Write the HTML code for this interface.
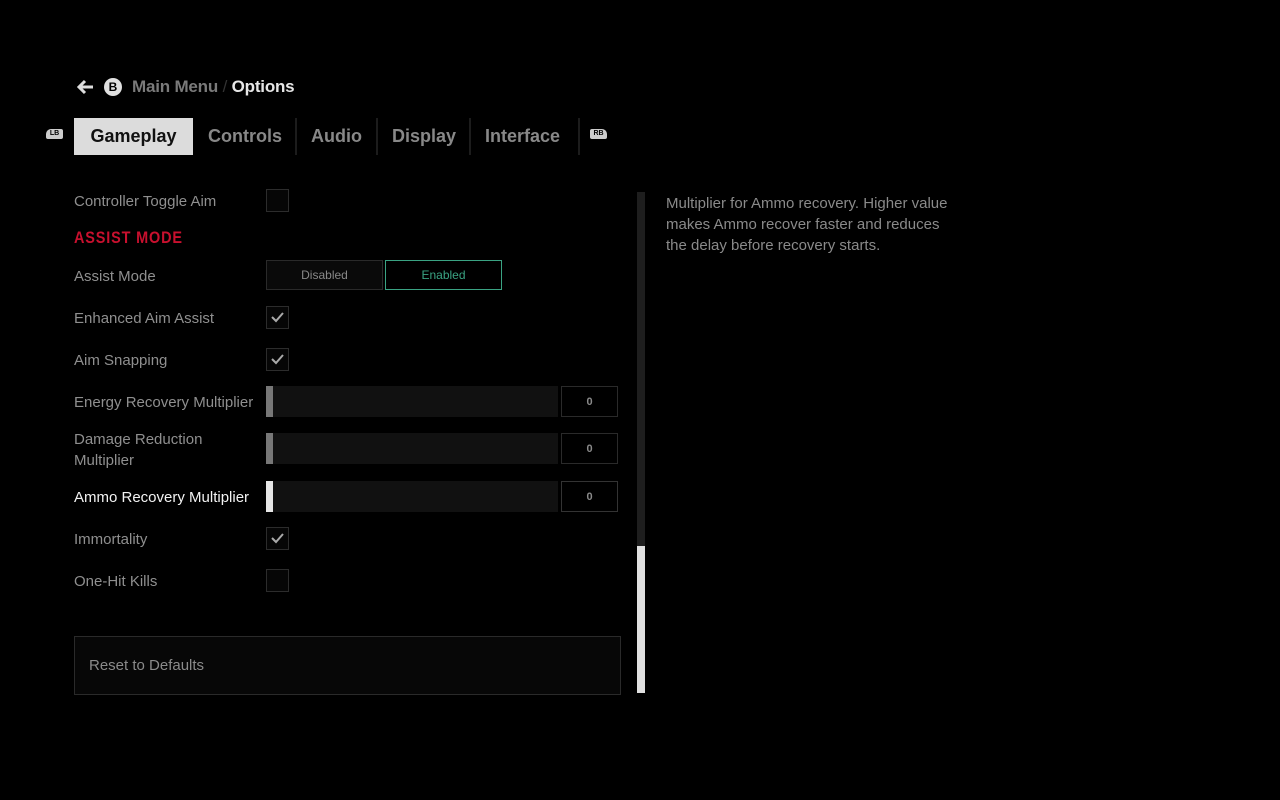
<!DOCTYPE html>
<html><head><style>
body{margin:0;width:1280px;height:800px;background:#000;font-family:"Liberation Sans",sans-serif;position:relative;overflow:hidden}
.a{position:absolute}
.lbl{position:absolute;left:74px;color:#8f8f8f;font-size:15px;line-height:21px}
.cb{position:absolute;left:266px;width:21px;height:21px;border:1px solid #2c2c2c;background:#060606}
.cb svg{position:absolute;left:4px;top:5px}
.tr{position:absolute;left:266px;width:292px;height:31px;background:#111}
.th{position:absolute;left:0;top:0;width:7px;height:31px;background:#777}
.vb{position:absolute;left:561px;width:55px;height:29px;border:1px solid #2a2a2a;color:#8a8a8a;font-size:11px;font-weight:bold;text-align:center;line-height:29px}
.tab{position:absolute;top:118px;height:37px;line-height:37px;font-size:18px;font-weight:bold;color:#888}
.sep{position:absolute;top:118px;width:2px;height:37px;background:#1c1c1c}
</style></head><body>
<svg class="a" style="left:76px;top:79px" width="18" height="16" viewBox="0 0 18 16"><path d="M17 8H3M9 2L3 8l6 6" stroke="#ddd" stroke-width="3" fill="none"/></svg>
<div class="a" style="left:104px;top:78px;width:18px;height:18px;border-radius:50%;background:#e0e0e0;color:#000;font-size:12px;font-weight:bold;text-align:center;line-height:18px">B</div>
<div class="a" style="left:132px;top:77px;font-size:17px;font-weight:bold;color:#7a7a7a;letter-spacing:-0.2px">Main Menu <span style="color:#333;font-weight:normal">/</span> <span style="color:#e6e6e6">Options</span></div>
<div class="a" style="left:46px;top:129px;width:17px;height:10px;background:#ccc;border-radius:5px 2px 2px 2px;color:#000;font-size:7px;font-weight:bold;text-align:center;line-height:10px">LB</div>
<div class="a" style="left:590px;top:129px;width:17px;height:10px;background:#ccc;border-radius:2px 5px 2px 2px;color:#000;font-size:7px;font-weight:bold;text-align:center;line-height:10px">RB</div>
<div class="tab" style="left:74px;width:119px;background:#dcdcdc;color:#111;text-align:center">Gameplay</div>
<div class="tab" style="left:208px">Controls</div><div class="sep" style="left:295px"></div>
<div class="tab" style="left:311px">Audio</div><div class="sep" style="left:376px"></div>
<div class="tab" style="left:392px">Display</div><div class="sep" style="left:469px"></div>
<div class="tab" style="left:485px">Interface</div><div class="sep" style="left:578px"></div>

<div class="lbl" style="top:191px">Controller Toggle Aim</div><div class="cb" style="top:189px"></div>
<div class="a" style="left:74px;top:228px;color:#c8102e;font-size:17px;font-weight:bold;letter-spacing:1px;transform:scaleX(.85);transform-origin:left">ASSIST MODE</div>
<div class="lbl" style="top:266px">Assist Mode</div>
<div class="a" style="left:266px;top:260px;width:115px;height:28px;border:1px solid #2a2a2a;background:#0a0a0a;color:#888;font-size:12px;text-align:center;line-height:29px">Disabled</div>
<div class="a" style="left:385px;top:260px;width:115px;height:28px;border:1px solid #3aa383;color:#3aa383;font-size:12px;text-align:center;line-height:29px">Enabled</div>
<div class="lbl" style="top:308px">Enhanced Aim Assist</div><div class="cb" style="top:306px"><svg width="13" height="11" viewBox="0 0 13 11"><path d="M1 5l4 4 7-8" stroke="#aaa" stroke-width="2" fill="none"/></svg></div>
<div class="lbl" style="top:350px">Aim Snapping</div><div class="cb" style="top:348px"><svg width="13" height="11" viewBox="0 0 13 11"><path d="M1 5l4 4 7-8" stroke="#aaa" stroke-width="2" fill="none"/></svg></div>
<div class="lbl" style="top:392px">Energy Recovery Multiplier</div><div class="tr" style="top:386px"><div class="th"></div></div><div class="vb" style="top:386px;line-height:31px">0</div>
<div class="lbl" style="top:429px">Damage Reduction<br>Multiplier</div><div class="tr" style="top:433px"><div class="th"></div></div><div class="vb" style="top:433px;line-height:31px">0</div>
<div class="lbl" style="top:487px;color:#f2f2f2">Ammo Recovery Multiplier</div><div class="tr" style="top:481px"><div class="th" style="background:#e6e6e6"></div></div><div class="vb" style="top:481px;border-color:#333;line-height:31px">0</div>
<div class="lbl" style="top:529px">Immortality</div><div class="cb" style="top:527px"><svg width="13" height="11" viewBox="0 0 13 11"><path d="M1 5l4 4 7-8" stroke="#aaa" stroke-width="2" fill="none"/></svg></div>
<div class="lbl" style="top:571px">One-Hit Kills</div><div class="cb" style="top:569px"></div>
<div class="a" style="left:74px;top:636px;width:545px;height:57px;border:1px solid #2a2a2a;background:#070707"></div>
<div class="a" style="left:89px;top:657px;color:#8a8a8a;font-size:15px">Reset to Defaults</div>
<div class="a" style="left:637px;top:192px;width:8px;height:501px;background:#1e1e1e"></div>
<div class="a" style="left:637px;top:546px;width:8px;height:147px;background:#e0e0e0"></div>
<div class="a" style="left:666px;top:193px;width:285px;color:#8a8a8a;font-size:15px;line-height:21px">Multiplier for Ammo recovery. Higher value makes Ammo recover faster and reduces the delay before recovery starts.</div>
</body></html>
